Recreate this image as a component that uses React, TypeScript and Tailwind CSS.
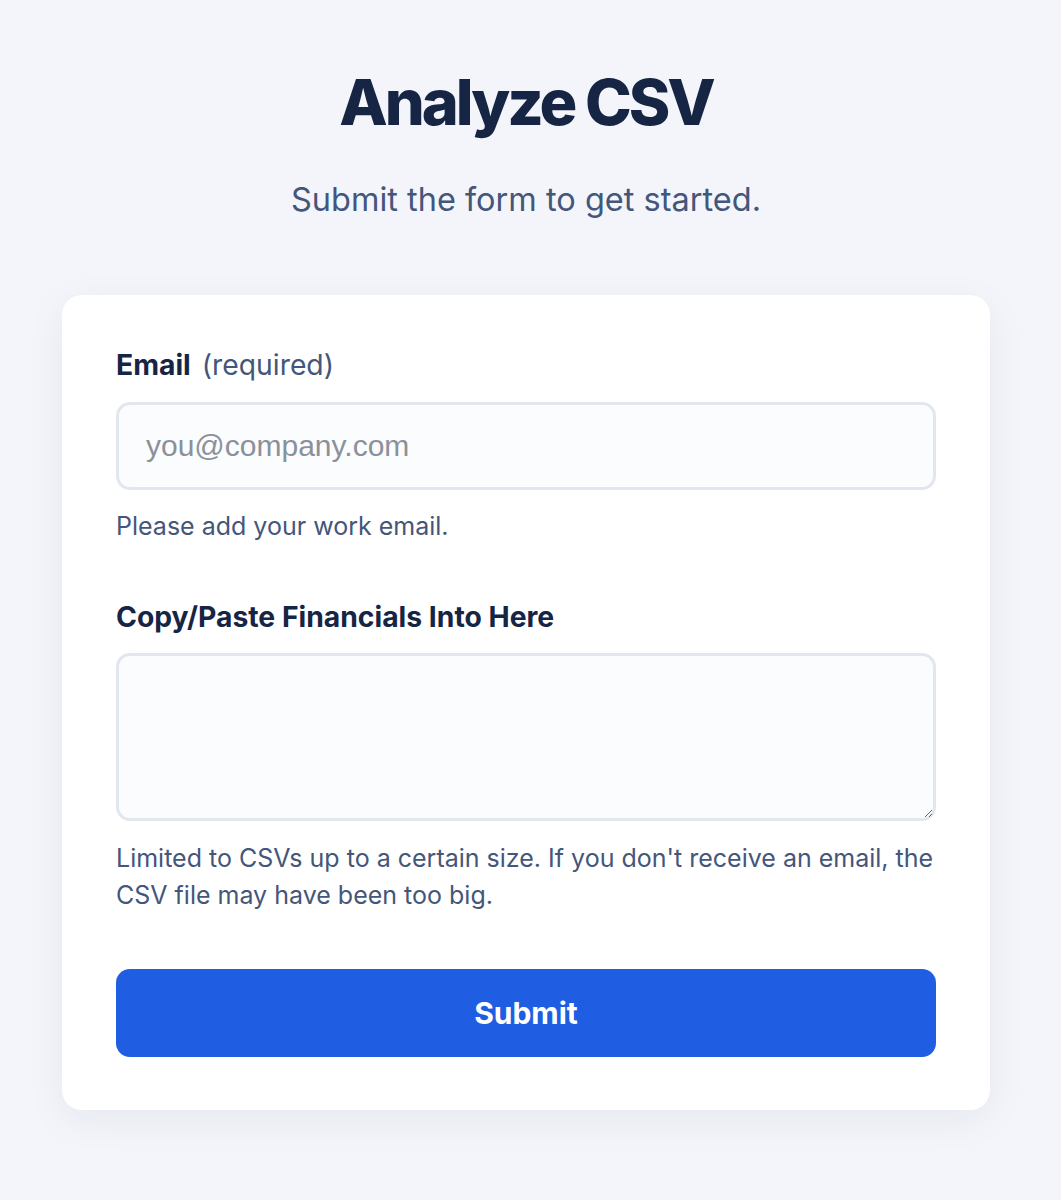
import React, { useState } from 'react';

const App: React.FC = () => {
  const [email, setEmail] = useState('');
  const [csv, setCsv] = useState('');

  return (
    <div className="min-h-[1200px] w-full bg-[#f3f5fa] font-['Inter',sans-serif]">
      <div className="flex flex-col items-center pt-[66px] pr-[9px]">
        {/* Заголовок */}
        <h1 className="text-[63px] font-extrabold leading-[72px] tracking-[-0.048em] text-[#172544]">
          Analyze CSV
        </h1>
        <p className="mt-[42px] text-[32.5px] leading-[40px] text-[#44567a]">
          Submit the form to get started.
        </p>

        {/* Карточка формы */}
        <form
          className="mt-[75px] w-[928px] rounded-[20px] bg-white px-[54px] pt-[50px] pb-[53px] shadow-[0_10px_40px_rgba(30,41,80,0.06)]"
          onSubmit={(e) => e.preventDefault()}
        >
          <label className="flex items-baseline gap-[11px] text-[28.3px] leading-[40px]">
            <span className="font-bold text-[#172544]">Email</span>
            <span className="text-[#44567a]">(required)</span>
          </label>
          <input
            type="email"
            value={email}
            onChange={(e) => setEmail(e.target.value)}
            placeholder="you@company.com"
            className="mt-[17px] block h-[88px] w-full rounded-[14px] border-[3px] border-[#e2e7ef] bg-[#fafcfe] px-[27px] font-['Liberation_Sans',Arial,sans-serif] text-[30px] text-[#172544] outline-none placeholder:text-[#8b9099]"
          />
          <p className="mt-[18px] text-[25px] leading-[36px] text-[#44567a]">
            Please add your work email.
          </p>

          <label className="mt-[53px] block text-[28.3px] font-bold leading-[40px] text-[#172544]">
            Copy/Paste Financials Into Here
          </label>
          <textarea
            value={csv}
            onChange={(e) => setCsv(e.target.value)}
            className="mt-[16px] block h-[168px] w-full rounded-[14px] border-[3px] border-[#e2e7ef] bg-[#fafcfe] px-[27px] py-[20px] text-[25px] text-[#172544] outline-none"
          />
          <p className="mt-[19px] text-[25px] leading-[37px] text-[#44567a]">
            Limited to CSVs up to a certain size. If you don't receive an email, the CSV file may have been too big.
          </p>

          <button
            type="submit"
            className="mt-[55px] flex h-[88px] w-full items-center justify-center rounded-[14px] bg-[#1f5ee2] text-[30px] font-bold text-white"
          >
            Submit
          </button>
        </form>
      </div>
    </div>
  );
};

export default App;
